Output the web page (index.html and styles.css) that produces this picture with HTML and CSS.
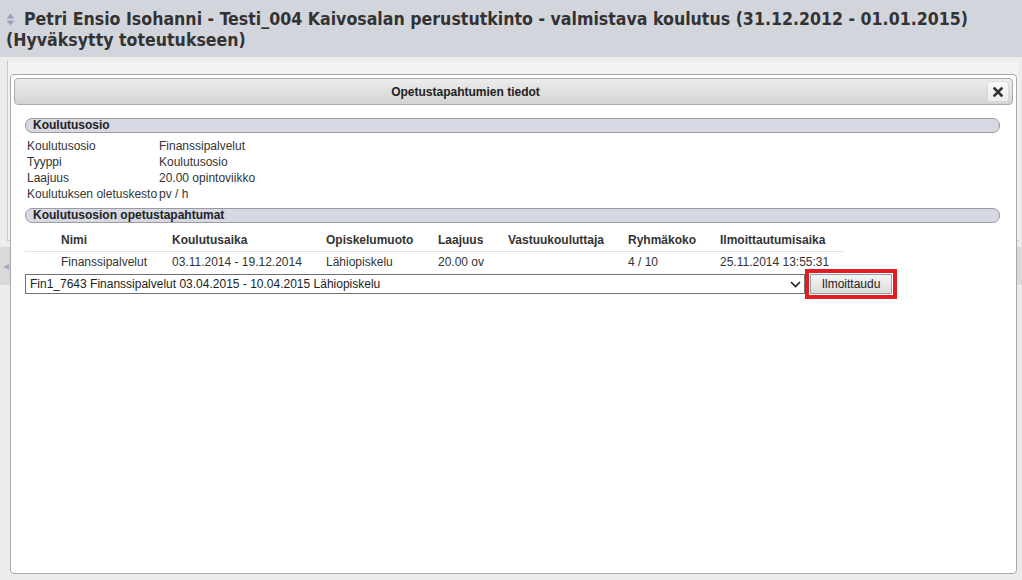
FILE: index.html
```html
<!DOCTYPE html>
<html lang="fi">
<head>
<meta charset="utf-8">
<title>Opetustapahtumien tiedot</title>
<link rel="stylesheet" href="styles.css">
</head>
<body>
<header class="topbar">
  <h1 class="title"><svg class="sort-icon" width="9" height="13" viewBox="0 0 9 13"><path d="M4.5 0.5 L8.5 5.5 H0.5 Z M4.5 12.5 L0.5 7.5 H8.5 Z" fill="#9aa0b8"/></svg>Petri Ensio Isohanni - Testi_004 Kaivosalan perustutkinto - valmistava koulutus (31.12.2012 - 01.01.2015)<br>(Hyväksytty toteutukseen)</h1>
</header>
<main class="stage">
  <div class="backpanel"></div>
  <div class="splitter"><span class="splitter-arrow">◂</span></div>

  <section class="dialog">
    <div class="dlg-title">
      <span>Opetustapahtumien tiedot</span>
      <button class="close-btn" type="button" aria-label="Sulje"><svg width="10" height="10" viewBox="0 0 10 10"><path d="M1.5 1.5 L8.5 8.5 M8.5 1.5 L1.5 8.5" stroke="#333" stroke-width="2.6" stroke-linecap="square"/></svg></button>
    </div>
    <div class="dlg-body">
      <div class="sec-head">Koulutusosio</div>
      <dl class="info">
        <dt>Koulutusosio</dt><dd>Finanssipalvelut</dd>
        <dt>Tyyppi</dt><dd>Koulutusosio</dd>
        <dt>Laajuus</dt><dd>20.00 opintoviikko</dd>
        <dt>Koulutuksen oletuskesto</dt><dd>pv / h</dd>
      </dl>
      <div class="sec-head sec-second">Koulutusosion opetustapahtumat</div>
      <table class="events">
        <colgroup>
          <col class="c0"><col class="c1"><col class="c2"><col class="c3"><col class="c4"><col class="c5"><col class="c6"><col class="c7">
        </colgroup>
        <thead>
          <tr><th></th><th>Nimi</th><th>Koulutusaika</th><th>Opiskelumuoto</th><th>Laajuus</th><th>Vastuukouluttaja</th><th>Ryhmäkoko</th><th>Ilmoittautumisaika</th></tr>
        </thead>
        <tbody>
          <tr><td></td><td>Finanssipalvelut</td><td>03.11.2014 - 19.12.2014</td><td>Lähiopiskelu</td><td>20.00 ov</td><td></td><td>4 / 10</td><td>25.11.2014 13:55:31</td></tr>
        </tbody>
      </table>
      <div class="enrol-row">
        <div class="select-box">
          <span>Fin1_7643 Finanssipalvelut 03.04.2015 - 10.04.2015 Lähiopiskelu</span>
          <svg class="chev" width="11" height="7" viewBox="0 0 11 7"><path d="M1 1 L5.5 5.5 L10 1" fill="none" stroke="#222" stroke-width="1.6"/></svg>
        </div>
        <div class="highlight">
          <button class="enrol-btn" type="button">Ilmoittaudu</button>
        </div>
      </div>
    </div>
  </section>
</main>
</body>
</html>
```

FILE: styles.css
```css
* { box-sizing: border-box; }
html, body { margin: 0; padding: 0; }
body {
  width: 1022px;
  height: 580px;
  overflow: hidden;
  background: #e4e4e4;
  font-family: "Liberation Sans", Arial, sans-serif;
  font-size: 12px;
  color: #333;
}

.topbar {
  height: 57px;
  background: #d3d5dd;
  padding: 9px 0 0 6px;
}
.title {
  margin: 0;
  font-family: "DejaVu Sans Condensed", "DejaVu Sans", Verdana, sans-serif;
  font-weight: bold;
  font-size: 17.6px;
  line-height: 21px;
  color: #333;
}
.sort-icon {
  display: inline-block;
  vertical-align: -1px;
  margin-right: 9px;
}

.stage {
  position: relative;
  height: 523px;
  padding-top: 4px;
  background: #ececec;
}
.backpanel {
  margin: 0 3px 0 7px;
  height: 180px;
  border-left: 1px solid #c8c8c8;
  border-bottom: 1px solid #c8c8c8;
  background: #f2f2f2;
}
.splitter {
  margin-top: 6px;
  height: 38px;
  background: #d9d9dc;
  display: flex;
  align-items: center;
  padding-left: 3px;
}
.splitter-arrow {
  color: #a3a9c0;
  font-size: 12px;
}

.dialog {
  position: absolute;
  left: 10px;
  top: 17px;
  width: 1007px;
  height: 500px;
  background: #fff;
  border: 1px solid #a8a8a8;
  border-radius: 4px;
  padding: 3px;
}
.dlg-title {
  position: relative;
  height: 27px;
  border: 1px solid #ababab;
  border-radius: 4px;
  background: linear-gradient(#ededed, #d3d3d3);
  display: flex;
  align-items: center;
  justify-content: center;
  padding-right: 96px;
  font-weight: bold;
  font-size: 12px;
  color: #222;
}
.close-btn {
  position: absolute;
  right: 3px;
  top: 2px;
  width: 22px;
  height: 21px;
  padding: 0;
  border: 1px solid #dadada;
  border-radius: 3px;
  background: linear-gradient(#fafafa, #ececec);
  display: flex;
  align-items: center;
  justify-content: center;
}

.dlg-body {
  padding: 13px 13px 0 11px;
}
.sec-head {
  height: 15px;
  border: 1px solid #9c9c9c;
  border-radius: 7px;
  background: #d6d9e4;
  padding-left: 7px;
  font-weight: bold;
  font-size: 12px;
  line-height: 13px;
  color: #222;
}
.sec-second { margin-top: 6px; }

.info {
  margin: 5px 0 0 2px;
  display: grid;
  grid-template-columns: 132px 1fr;
  line-height: 16px;
}
.info dt, .info dd { margin: 0; }

.events {
  margin-top: 6px;
  width: 818px;
  border-collapse: collapse;
  table-layout: fixed;
}
.c0 { width: 31px; }
.c1 { width: 111px; }
.c2 { width: 154px; }
.c3 { width: 112px; }
.c4 { width: 70px; }
.c5 { width: 120px; }
.c6 { width: 92px; }
.c7 { width: 128px; }
.events th, .events td {
  padding: 0 0 0 5px;
  text-align: left;
  white-space: nowrap;
}
.events th {
  height: 22px;
  font-weight: bold;
  color: #333;
  border-bottom: 1px solid #e2e2e2;
}
.events td {
  height: 22px;
}

.enrol-row {
  display: flex;
  align-items: center;
  margin-top: -4px;
}
.select-box {
  width: 780px;
  height: 20px;
  border: 1px solid #6f6f6f;
  background: #fff;
  display: flex;
  align-items: center;
  justify-content: space-between;
  padding: 0 3px 0 4px;
  color: #222;
}
.chev { display: block; }
.highlight {
  border: 4px solid #e21b24;
  padding: 1px;
  background: #fff;
}
.enrol-btn {
  display: block;
  width: 82px;
  height: 20px;
  padding: 0;
  border: 1px solid #a0a0a0;
  border-radius: 0;
  background: linear-gradient(#f6f6f6, #dadada);
  font-family: "Liberation Sans", Arial, sans-serif;
  font-size: 12px;
  color: #222;
}
```
